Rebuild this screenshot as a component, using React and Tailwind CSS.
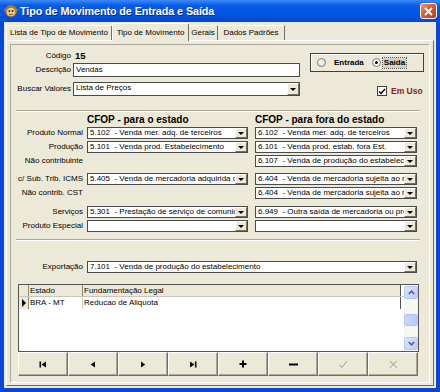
import React from 'react'

const CFOP = [
  { label: 'Produto Normal', left: '5.102  - Venda mer. adq. de terceiros', right: '6.102  - Venda mer. adq. de terceiros', mt: 'mt-[1px]' },
  { label: 'Produção', left: '5.101  - Venda prod. Estabelecimento', right: '6.101  - Venda prod. estab. fora Est.', mt: 'mt-[2px]' },
  { label: 'Não contribuinte', right: '6.107  - Venda de produção do estabelec', mt: 'mt-[2px]' },
  { label: 'c/ Sub. Trib. ICMS', left: '5.405  - Venda de mercadoria adquirida o', right: '6.404  - Venda de mercadoria sujeita ao r', mt: 'mt-[6px]' },
  { label: 'Não contrib. CST', right: '6.404  - Venda de mercadoria sujeita ao r', mt: 'mt-[2px]' },
  { label: 'Serviços', left: '5.301  - Prestação de serviço de comunic', right: '6.949  - Outra saída de mercadoria ou pre', mt: 'mt-[7px]' },
  { label: 'Produto Especial', left: '', right: '', mt: 'mt-[2px]' },
]

function DropBtn() {
  return (
    <div className="w-[12px] h-full shrink-0 flex items-center justify-center bg-[#ECE9D8] border-t border-l border-white border-r border-b border-r-[#716F64] border-b-[#716F64]">
      <div className="w-0 h-0 border-x-[3px] border-x-transparent border-t-[3px] border-t-black" />
    </div>
  )
}

function Combo({ text = '', className = '' }) {
  return (
    <div className={`flex h-[12px] bg-white border border-[#4a4a4a] ${className}`}>
      <div className="flex-1 min-w-0 overflow-hidden whitespace-pre text-[8px] leading-[10px] pl-[2px]">{text}</div>
      <DropBtn />
    </div>
  )
}

function Separator({ className = '' }) {
  return (
    <div className={`ml-[5px] w-[404px] border-t border-[#ACA899] border-b border-b-white ${className}`} />
  )
}

function NavIcon({ kind }) {
  if (kind === 'first') return <svg width="8" height="7" viewBox="0 0 8 7"><rect x="0.5" y="0.5" width="1.6" height="6" fill="#000" /><path d="M7 0.5 L2.6 3.5 L7 6.5 Z" fill="#000" /></svg>
  if (kind === 'prior') return <svg width="6" height="7" viewBox="0 0 6 7"><path d="M5 0.5 L0.8 3.5 L5 6.5 Z" fill="#000" /></svg>
  if (kind === 'next') return <svg width="6" height="7" viewBox="0 0 6 7"><path d="M1 0.5 L5.2 3.5 L1 6.5 Z" fill="#000" /></svg>
  if (kind === 'last') return <svg width="8" height="7" viewBox="0 0 8 7"><path d="M1 0.5 L5.4 3.5 L1 6.5 Z" fill="#000" /><rect x="5.9" y="0.5" width="1.6" height="6" fill="#000" /></svg>
  if (kind === 'plus') return <svg width="8" height="8" viewBox="0 0 8 8"><rect x="3" y="0.5" width="2" height="7" fill="#000" /><rect x="0.5" y="3" width="7" height="2" fill="#000" /></svg>
  if (kind === 'minus') return <svg width="9" height="3" viewBox="0 0 9 3"><rect x="0" y="0.5" width="9" height="2" fill="#000" /></svg>
  if (kind === 'post') return <svg width="10" height="9" viewBox="0 0 10 9"><path d="M1.5 5 L4 7.5 L9 1.5" fill="none" stroke="#fff" strokeWidth="1.4" transform="translate(0.6,0.6)" /><path d="M1.5 5 L4 7.5 L9 1.5" fill="none" stroke="#b8b4a4" strokeWidth="1.4" /></svg>
  return <svg width="9" height="9" viewBox="0 0 9 9"><path d="M1 1 L8 8 M8 1 L1 8" stroke="#fff" strokeWidth="1.3" transform="translate(0.6,0.6)" /><path d="M1 1 L8 8 M8 1 L1 8" stroke="#b8b4a4" strokeWidth="1.3" /></svg>
}

function ScrollArrow({ up }) {
  return (
    <div className="h-[13px] w-full rounded-[2px] bg-[linear-gradient(135deg,#dbe6fd,#b9cdf7)] border border-[#b5c8f3] flex items-center justify-center">
      <svg width="7" height="5" viewBox="0 0 7 5">
        <path d={up ? 'M0.8 4 L3.5 1.2 L6.2 4' : 'M0.8 1 L3.5 3.8 L6.2 1'} fill="none" stroke="#4d6185" strokeWidth="1.5" />
      </svg>
    </div>
  )
}

export default function App() {
  return (
    <div className="w-[440px] h-[392px] flex flex-col bg-[#0A47D4] overflow-hidden font-['Liberation_Sans',Arial,sans-serif] text-black">
      {/* title bar */}
      <div className="h-[22px] shrink-0 flex items-center pl-[4px] pr-[3px] bg-[linear-gradient(180deg,#3d8af7,#0a5ae9_25%,#0054e3_70%,#0846c6)]">
        <svg width="14" height="14" viewBox="0 0 14 14">
          <circle cx="7" cy="7" r="6" fill="#a8752a" />
          <circle cx="7" cy="8" r="4.3" fill="#f3cf7a" />
          <circle cx="5.4" cy="7" r="0.9" fill="#222" />
          <circle cx="8.6" cy="7" r="0.9" fill="#222" />
          <path d="M5 10 Q7 11.5 9 10" stroke="#7a3a10" strokeWidth="0.9" fill="none" />
          <circle cx="1.5" cy="6" r="1.5" fill="#a8752a" />
          <circle cx="12.5" cy="6" r="1.5" fill="#a8752a" />
        </svg>
        <div className="ml-[2px] text-white font-bold text-[10.8px] tracking-[-0.1px] leading-none [text-shadow:1px_1px_0_#0a2f8f]">Tipo de Movimento de Entrada e Saída</div>
        <div className="flex-1" />
        <div className="w-[17px] h-[16px] rounded-[3px] border border-white bg-[linear-gradient(135deg,#f19a7d,#dc5a31_45%,#c23c14)] flex items-center justify-center">
          <svg width="9" height="9" viewBox="0 0 9 9"><path d="M1 1 L8 8 M8 1 L1 8" stroke="#fff" strokeWidth="1.8" /></svg>
        </div>
      </div>

      {/* client area */}
      <div className="flex-1 mx-[4px] mb-[4px] bg-[#ECE9D8] flex flex-col">
        {/* tabs */}
        <div className="h-[18px] shrink-0 flex items-end pl-[2px] text-[8px] leading-none">
          <div className="w-[106px] h-[15px] flex items-center justify-center border-t border-l border-white border-r border-r-[#716F64] rounded-t-[2px]">Lista de Tipo de Movimento</div>
          <div className="w-[77px] h-[18px] -mb-[1px] flex items-center justify-center bg-[#ECE9D8] border-t border-l border-white border-r border-r-[#716F64] rounded-t-[2px] relative">Tipo de Movimento</div>
          <div className="w-[29px] h-[15px] flex items-center justify-center border-t border-white border-r border-r-[#716F64]">Gerais</div>
          <div className="w-[67px] h-[15px] flex items-center justify-center border-t border-white border-r border-r-[#716F64]">Dados Padrões</div>
        </div>

        {/* tab sheet */}
        <div className="flex-1 mx-[2px] mb-[2px] border-t border-l border-white border-r border-b border-r-[#716F64] border-b-[#716F64] flex flex-col">
          <div className="flex-1 mt-[3px] ml-[3px] mr-[3px] mb-[2px] border-t border-l border-[#ACA899] border-r border-b border-r-white border-b-white flex flex-col">
            {/* top section */}
            <div className="flex">
              <div className="w-[289px] flex flex-col">
                <div className="mt-[5px] h-[11px] flex items-center text-[8px] leading-none">
                  <div className="w-[60px] text-right">Código</div>
                  <div className="ml-[4px] font-bold text-[9.5px]">15</div>
                </div>
                <div className="mt-[2px] h-[14px] flex items-center text-[8px] leading-none">
                  <div className="w-[60px] text-right">Descrição</div>
                  <div className="ml-[2px] flex-1 h-full bg-white border border-[#4a4a4a] flex items-center pl-[2px]">Vendas</div>
                </div>
                <div className="mt-[5px] h-[14px] flex items-center text-[8px] leading-none">
                  <div className="w-[60px] text-right whitespace-nowrap">Buscar Valores</div>
                  <Combo text="Lista de Preços" className="ml-[2px] flex-1 h-[14px]" />
                </div>
              </div>
              <div className="ml-[10px] flex flex-col">
                <div className="mt-[8px] w-[114px] h-[19px] border border-[#404040] shadow-[inset_1px_1px_0_#fff] flex items-center text-[8px] font-bold leading-none">
                  <div className="ml-[6px] w-[9px] h-[9px] rounded-full border border-[#7a7a7a] bg-[radial-gradient(circle_at_35%_35%,#fff,#dcd9cc)]" />
                  <div className="ml-[8px]">Entrada</div>
                  <div className="ml-[8px] w-[9px] h-[9px] rounded-full border border-[#7a7a7a] bg-white flex items-center justify-center">
                    <div className="w-[3px] h-[3px] rounded-full bg-black" />
                  </div>
                  <div className="ml-[2px] px-[1px] py-[1px] bg-[#d6d2c2] outline outline-1 outline-dotted outline-[#555]">Saída</div>
                </div>
                <div className="mt-[14px] ml-[67px] h-[10px] flex items-center">
                  <div className="w-[10px] h-[10px] bg-white border border-[#404040] flex items-center justify-center">
                    <svg width="8" height="7" viewBox="0 0 8 7"><path d="M1 3.5 L3 5.5 L7 1" fill="none" stroke="#000" strokeWidth="1.5" /></svg>
                  </div>
                  <div className="ml-[4px] text-[8.5px] font-bold text-[#8b1a1a] leading-none">Em Uso</div>
                </div>
              </div>
            </div>

            <Separator className="mt-[14px]" />

            {/* CFOP headers */}
            <div className="mt-[2px] h-[12px] flex items-center text-[10px] font-bold leading-none">
              <div className="ml-[76px] w-[168px]">CFOP - para o estado</div>
              <div>CFOP - para fora do estado</div>
            </div>

            {CFOP.map(r => (
              <div key={r.label} className={`flex items-center h-[12px] ${r.mt}`}>
                <div className="w-[72px] text-right text-[8px] leading-none whitespace-nowrap">{r.label}</div>
                <div className="w-[161px] ml-[4px]">{r.left !== undefined && <Combo text={r.left} />}</div>
                <div className="w-[162px] ml-[7px]"><Combo text={r.right} /></div>
              </div>
            ))}

            <Separator className="mt-[7px]" />

            {/* exportação */}
            <div className="mt-[20px] h-[12px] flex items-center">
              <div className="w-[72px] text-right text-[8px] leading-none">Exportação</div>
              <Combo text="7.101  - Venda de produção do estabelecimento" className="ml-[4px] w-[330px]" />
            </div>

            {/* grid */}
            <div className="mt-[11px] ml-[7px] w-[401px] h-[68px] border border-[#555] bg-white flex text-[8px] leading-none">
              <div className="flex-1 flex flex-col">
                <div className="flex h-[12px] border-b border-[#c9c6b8]">
                  <div className="w-[10px] bg-[#ECE9D8] border-r border-[#888]" />
                  <div className="w-[54px] bg-[#ECE9D8] border-r border-[#888] flex items-center pl-[1px]">Estado</div>
                  <div className="w-[318px] bg-[#ECE9D8] border-r border-[#555] flex items-center pl-[1px]">Fundamentação Legal</div>
                </div>
                <div className="flex h-[12px]">
                  <div className="w-[10px] bg-[#ECE9D8] border-r border-[#888] flex items-center justify-center">
                    <div className="w-0 h-0 border-y-[4px] border-y-transparent border-l-[4px] border-l-black" />
                  </div>
                  <div className="w-[54px] border-r border-[#d4d0c8] flex items-center pl-[1px]">BRA - MT</div>
                  <div className="w-[318px] border-r border-[#555] flex items-center pl-[1px]">Reducao de Aliquota</div>
                </div>
              </div>
              <div className="w-[14px] h-full bg-[#f7f6f1] flex flex-col py-[1px]">
                <ScrollArrow up />
                <div className="mt-[15px] h-[12px] rounded-[2px] bg-[linear-gradient(90deg,#c9d8fc,#b6cbf6)] border border-[#b5c8f3]" />
                <div className="flex-1" />
                <ScrollArrow />
              </div>
            </div>

            {/* navigator */}
            <div className="ml-[7px] w-[400px] h-[24px] flex">
              {['first', 'prior', 'next', 'last', 'plus', 'minus', 'post', 'cancel'].map(k => (
                <div key={k} className="w-[50px] h-full flex items-center justify-center bg-[#ECE9D8] border-t border-l border-white border-r border-b border-r-[#716F64] border-b-[#716F64] shadow-[inset_-1px_-1px_0_#ACA899]">
                  <NavIcon kind={k} />
                </div>
              ))}
            </div>
          </div>
        </div>
      </div>
    </div>
  )
}
